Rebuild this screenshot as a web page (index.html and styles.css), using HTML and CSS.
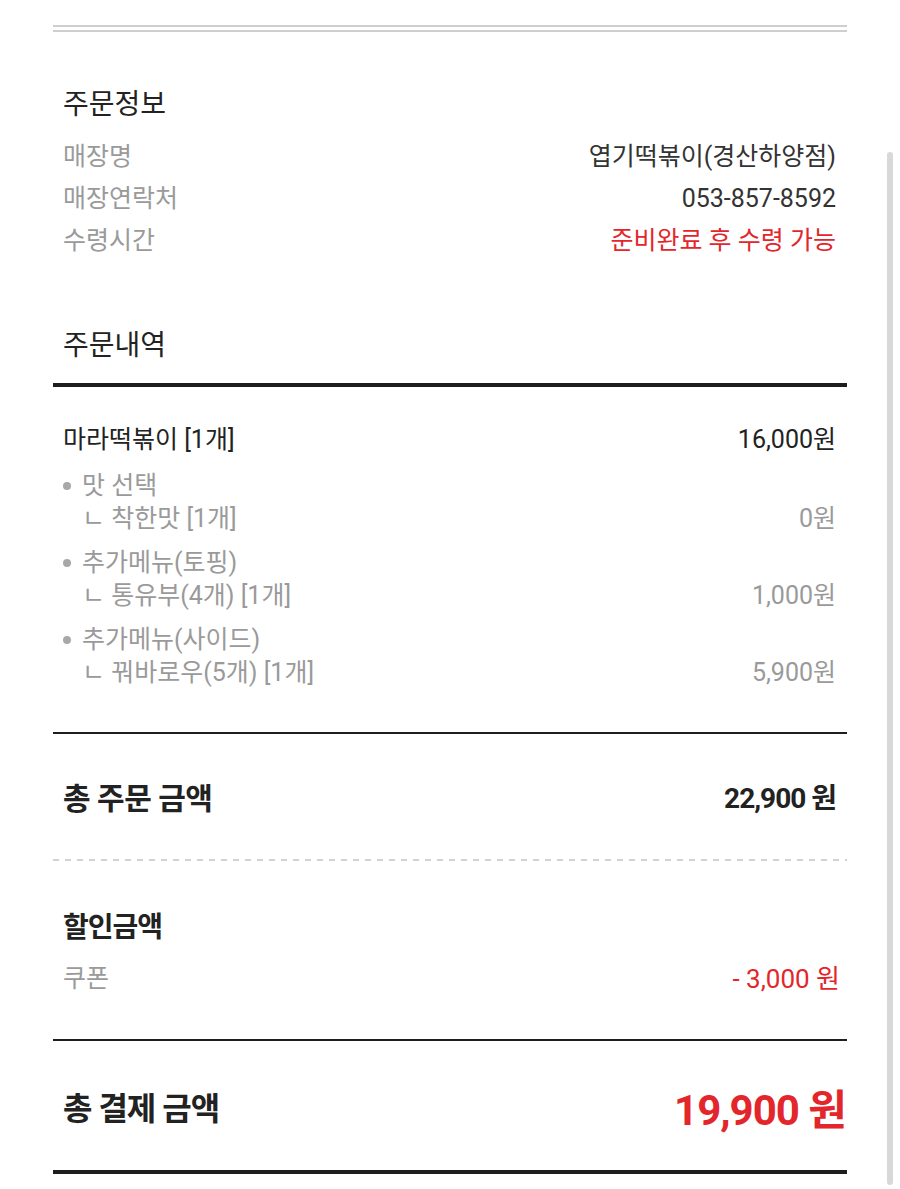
FILE: index.html
```html
<!DOCTYPE html>
<html lang="ko">
<head>
    <meta charset="UTF-8">
    <meta name="viewport" content="width=device-width, initial-scale=1.0">
    <title>주문상세</title>
    <link rel="stylesheet" href="styles.css">
</head>
<body>

    <main class="receipt">
        <div class="double-rule"></div>

        <section class="order-info">
            <h2 class="section-title">주문정보</h2>
            <div class="info-row">
                <span class="label">매장명</span>
                <span class="value">엽기떡볶이(경산하양점)</span>
            </div>
            <div class="info-row">
                <span class="label">매장연락처</span>
                <span class="value">053-857-8592</span>
            </div>
            <div class="info-row">
                <span class="label">수령시간</span>
                <span class="value red">준비완료 후 수령 가능</span>
            </div>
        </section>

        <section class="order-items">
            <h2 class="section-title">주문내역</h2>
            <div class="thick-rule"></div>

            <div class="item-row">
                <span>마라떡볶이 [1개]</span>
                <span>16,000원</span>
            </div>

            <div class="option-group">
                <div class="option-name"><span class="dot"></span>맛 선택</div>
                <div class="option-row">
                    <span>ㄴ 착한맛 [1개]</span>
                    <span>0원</span>
                </div>
            </div>
            <div class="option-group">
                <div class="option-name"><span class="dot"></span>추가메뉴(토핑)</div>
                <div class="option-row">
                    <span>ㄴ 통유부(4개) [1개]</span>
                    <span>1,000원</span>
                </div>
            </div>
            <div class="option-group">
                <div class="option-name"><span class="dot"></span>추가메뉴(사이드)</div>
                <div class="option-row">
                    <span>ㄴ 꿔바로우(5개) [1개]</span>
                    <span>5,900원</span>
                </div>
            </div>
        </section>

        <div class="thin-rule"></div>

        <div class="total-row">
            <span>총 주문 금액</span>
            <span class="total-price">22,900 원</span>
        </div>

        <div class="dashed-rule"></div>

        <section class="discount">
            <h3 class="discount-title">할인금액</h3>
            <div class="discount-row">
                <span class="label">쿠폰</span>
                <span class="discount-price">- 3,000 원</span>
            </div>
        </section>

        <div class="thin-rule"></div>

        <div class="pay-row">
            <span>총 결제 금액</span>
            <span class="pay-price">19,900 원</span>
        </div>

        <div class="thick-rule bottom"></div>
    </main>

    <div class="scroll-thumb"></div>

</body>
</html>
```

FILE: styles.css
```css
:root {
    --text-color: #222;
    --value-color: #333;
    --subtle-text-color: #9a9a9a;
    --red-color: #e3262b;
    --rule-color: #1e1e1e;
    --light-rule-color: #cfcfcf;
}

* {
    box-sizing: border-box;
    margin: 0;
    padding: 0;
}

body {
    font-family: Roboto, "Noto Sans CJK KR", sans-serif;
    background-color: #fff;
    color: var(--text-color);
    width: 900px;
    min-height: 1189px;
    position: relative;
    overflow: hidden;
}

.receipt {
    width: 794px;
    margin-left: 53px;
}

.double-rule {
    margin-top: 25px;
    height: 7px;
    border-top: 2px solid var(--light-rule-color);
    border-bottom: 2px solid var(--light-rule-color);
}

.section-title {
    font-size: 28px;
    font-weight: 400;
    line-height: 40px;
    padding-left: 10px;
    color: var(--text-color);
}

.order-info {
    margin-top: 53px;
}

.order-info .section-title {
    margin-bottom: 11px;
}

.info-row {
    display: flex;
    justify-content: space-between;
    font-size: 25px;
    line-height: 42px;
    padding: 0 11px 0 10px;
}

.label {
    color: var(--subtle-text-color);
}

.value {
    color: var(--value-color);
}

.red {
    color: var(--red-color);
}

.order-items {
    margin-top: 64px;
}

.thick-rule {
    height: 4px;
    background-color: var(--rule-color);
    margin-top: 17px;
}

.item-row,
.option-row {
    display: flex;
    justify-content: space-between;
    font-size: 25px;
    line-height: 33px;
    padding: 0 11px 0 10px;
}

.item-row {
    margin-top: 36px;
    color: var(--text-color);
}

.option-group {
    margin-top: 11px;
    color: var(--subtle-text-color);
    font-size: 25px;
    line-height: 33px;
}

.item-row + .option-group {
    margin-top: 13px;
}

.option-name {
    display: flex;
    align-items: center;
    padding-left: 10px;
}

.dot {
    width: 8px;
    height: 8px;
    border-radius: 50%;
    background-color: #a8a8a8;
    margin-right: 11px;
}

.option-row {
    padding-left: 29px;
}

.thin-rule {
    height: 2px;
    background-color: var(--rule-color);
    margin-top: 43px;
}

.total-row {
    display: flex;
    justify-content: space-between;
    align-items: center;
    height: 40px;
    margin-top: 42px;
    padding: 0 11px 0 10px;
    font-size: 30px;
    font-weight: 700;
    letter-spacing: -0.5px;
}

.total-price {
    font-size: 28px;
    letter-spacing: -1px;
}

.dashed-rule {
    height: 2px;
    margin-top: 43px;
    background-image: repeating-linear-gradient(to right, #d2d2d2 0, #d2d2d2 6px, transparent 6px, transparent 12px);
}

.discount {
    margin-top: 49px;
}

.discount-title {
    font-size: 28px;
    font-weight: 700;
    line-height: 36px;
    letter-spacing: -1px;
    padding-left: 10px;
}

.discount-row {
    display: flex;
    justify-content: space-between;
    margin-top: 13px;
    font-size: 25px;
    line-height: 40px;
    padding: 0 7px 0 10px;
}

.discount-price {
    font-size: 26px;
    color: var(--red-color);
}

.discount + .thin-rule {
    margin-top: 40px;
}

.pay-row {
    display: flex;
    justify-content: space-between;
    align-items: center;
    height: 50px;
    margin-top: 40px;
    padding: 0 1px 0 10px;
    font-size: 32px;
    font-weight: 700;
    letter-spacing: -1px;
}

.pay-price {
    font-size: 42px;
    color: var(--red-color);
}

.thick-rule.bottom {
    margin-top: 39px;
}

.scroll-thumb {
    position: absolute;
    left: 887px;
    top: 152px;
    width: 6px;
    height: 1033px;
    border-radius: 3px;
    background-color: #d8d8d8;
}
```
